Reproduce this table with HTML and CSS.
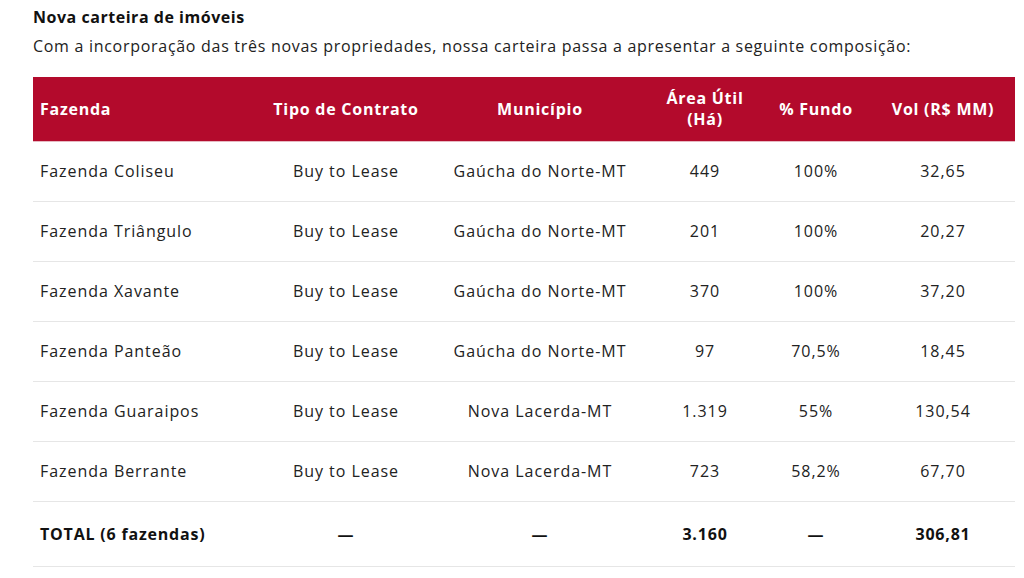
FILE: index.html
```html
<!DOCTYPE html>
<html lang="pt-BR">
<head>
<meta charset="utf-8">
<title>Nova carteira de imóveis</title>
<link rel="stylesheet" href="styles.css">
</head>
<body>
<section class="portfolio">
  <h3 class="title">Nova carteira de imóveis</h3>
  <p class="lead">Com a incorporação das três novas propriedades, nossa carteira passa a apresentar a seguinte composição:</p>
  <table class="farms">
    <colgroup>
      <col class="c-name"><col class="c-type"><col class="c-city"><col class="c-area"><col class="c-pct"><col class="c-vol">
    </colgroup>
    <thead>
      <tr>
        <th class="left">Fazenda</th>
        <th>Tipo de Contrato</th>
        <th>Município</th>
        <th>Área Útil<br>(Há)</th>
        <th>% Fundo</th>
        <th>Vol (R$ MM)</th>
      </tr>
    </thead>
    <tbody>
      <tr><td class="left">Fazenda Coliseu</td><td>Buy to Lease</td><td>Gaúcha do Norte-MT</td><td>449</td><td>100%</td><td>32,65</td></tr>
      <tr><td class="left">Fazenda Triângulo</td><td>Buy to Lease</td><td>Gaúcha do Norte-MT</td><td>201</td><td>100%</td><td>20,27</td></tr>
      <tr><td class="left">Fazenda Xavante</td><td>Buy to Lease</td><td>Gaúcha do Norte-MT</td><td>370</td><td>100%</td><td>37,20</td></tr>
      <tr><td class="left">Fazenda Panteão</td><td>Buy to Lease</td><td>Gaúcha do Norte-MT</td><td>97</td><td>70,5%</td><td>18,45</td></tr>
      <tr><td class="left">Fazenda Guaraipos</td><td>Buy to Lease</td><td>Nova Lacerda-MT</td><td>1.319</td><td>55%</td><td>130,54</td></tr>
      <tr><td class="left">Fazenda Berrante</td><td>Buy to Lease</td><td>Nova Lacerda-MT</td><td>723</td><td>58,2%</td><td>67,70</td></tr>
      <tr class="total"><td class="left">TOTAL (6 fazendas)</td><td>—</td><td>—</td><td>3.160</td><td>—</td><td>306,81</td></tr>
    </tbody>
  </table>
</section>
</body>
</html>
```
FILE: styles.css
```css
html, body {
  margin: 0;
  padding: 0;
  background: #ffffff;
}
body {
  font-family: "Open Sans", "DejaVu Sans", sans-serif;
  color: #222222;
}
.portfolio {
  padding: 6px 9px 0 33px;
}
.title {
  margin: 0;
  font-size: 16px;
  font-weight: 700;
  line-height: 22px;
  color: #111111;
  letter-spacing: 0.53px;
}
.lead {
  margin: 7px 0 0;
  font-size: 16px;
  line-height: 22px;
  letter-spacing: 0.71px;
  color: #222222;
}
.farms {
  margin-top: 20px;
  width: 982px;
  border-collapse: collapse;
  table-layout: fixed;
  font-size: 16px;
  letter-spacing: 0.95px;
}
.c-name { width: 228px; }
.c-type { width: 170px; }
.c-city { width: 218px; }
.c-area { width: 112px; }
.c-pct { width: 110px; }
.c-vol { width: 144px; }
.farms th {
  background: #b30a2c;
  color: #ffffff;
  font-weight: 700;
  letter-spacing: 0.75px;
  line-height: 21px;
  height: 64px;
  padding: 0 7px;
  text-align: center;
  border-bottom: 1px solid #e6b9c2;
}
.farms td {
  height: 58px;
  padding: 0 7px 1px;
  text-align: center;
  border-bottom: 1px solid #e6e6e6;
  line-height: 20px;
}
.farms .left {
  text-align: left;
}
.farms .total td {
  height: 63px;
  font-weight: 700;
  letter-spacing: 0.8px;
  color: #111111;
}
```
